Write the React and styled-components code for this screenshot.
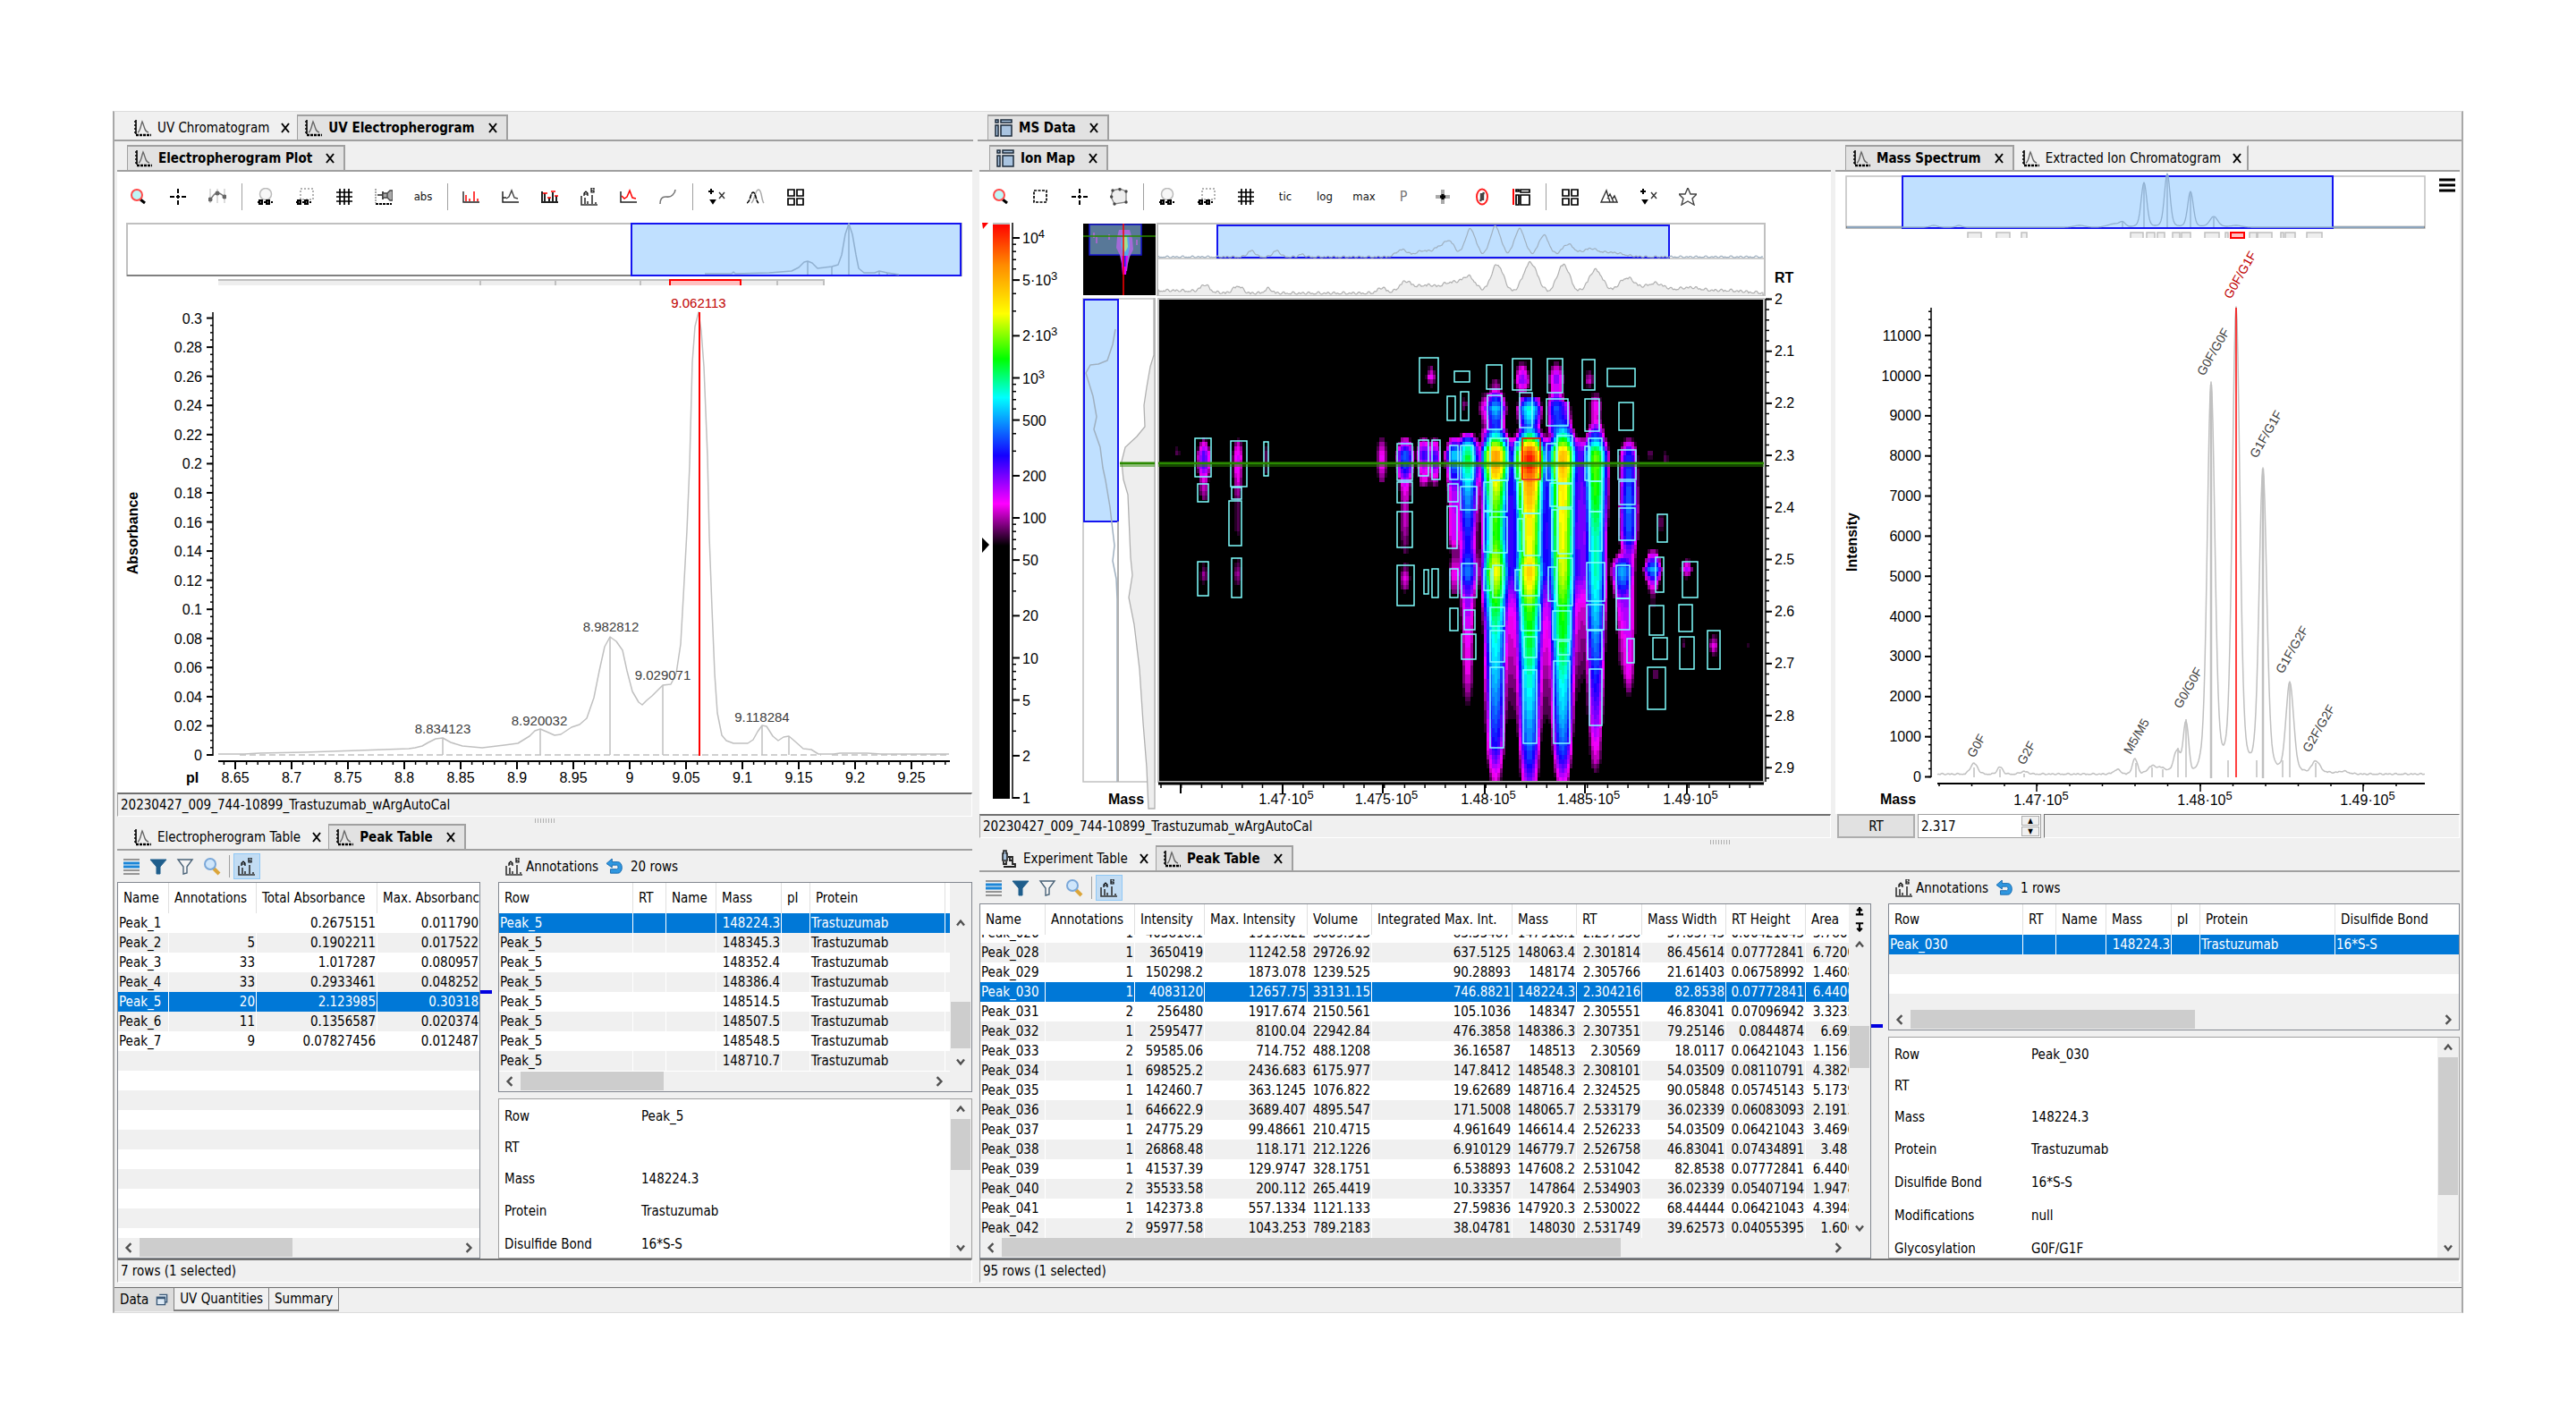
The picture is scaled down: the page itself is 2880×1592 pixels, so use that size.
import { useEffect, useRef } from "react"
import styled, { createGlobalStyle } from "styled-components"

const PLOT_FONT = '"Liberation Sans", Arial, sans-serif'

/* ---------- table data ---------- */

const peakColumns = [
  { label: "Name", width: 57 },
  { label: "Annotations", width: 98, right: true },
  { label: "Total Absorbance", width: 135, right: true },
  { label: "Max. Absorbance", right: true },
]

const peakRows = [
  ["Peak_1", "", "0.2675151", "0.011790"],
  ["Peak_2", "5", "0.1902211", "0.017522"],
  ["Peak_3", "33", "1.017287", "0.080957"],
  ["Peak_4", "33", "0.2933461", "0.048252"],
  ["Peak_5", "20", "2.123985", "0.30318"],
  ["Peak_6", "11", "0.1356587", "0.020374"],
  ["Peak_7", "9", "0.07827456", "0.012487"],
]

const annotationColumns = [
  { label: "Row", width: 150 },
  { label: "RT", width: 37 },
  { label: "Name", width: 56 },
  { label: "Mass", width: 73, right: true },
  { label: "pI", width: 32 },
  { label: "Protein", width: 151 },
]

const annotationRows = [
  "148224.3", "148345.3", "148352.4", "148386.4", "148514.5", "148507.5", "148548.5", "148710.7",
].map((mass) => ["Peak_5", "", "", mass, "", "Trastuzumab", ""])

const ionColumns = [
  { label: "Name", width: 73 },
  { label: "Annotations", width: 100, right: true },
  { label: "Intensity", width: 78, right: true },
  { label: "Max. Intensity", width: 115, right: true },
  { label: "Volume", width: 72, right: true },
  { label: "Integrated Max. Int.", width: 157, right: true },
  { label: "Mass", width: 72, right: true },
  { label: "RT", width: 73, right: true },
  { label: "Mass Width", width: 94, right: true },
  { label: "RT Height", width: 89, right: true },
  { label: "Area", width: 56, right: true },
]

const ionRows = [
  ["Peak_026", "1", "405818.1", "1919.622", "3869.913", "83.55487", "147918.1", "2.297358", "57.63743", "0.06421043", "3.7861"],
  ["Peak_028", "1", "3650419", "11242.58", "29726.92", "637.5125", "148063.4", "2.301814", "86.45614", "0.07772841", "6.7200"],
  ["Peak_029", "1", "150298.2", "1873.078", "1239.525", "90.28893", "148174", "2.305766", "21.61403", "0.06758992", "1.4608"],
  ["Peak_030", "1", "4083120", "12657.75", "33131.15", "746.8821", "148224.3", "2.304216", "82.8538", "0.07772841", "6.4400"],
  ["Peak_031", "2", "256480", "1917.674", "2150.561", "105.1036", "148347", "2.305551", "46.83041", "0.07096942", "3.3235"],
  ["Peak_032", "1", "2595477", "8100.04", "22942.84", "476.3858", "148386.3", "2.307351", "79.25146", "0.0844874", "6.695"],
  ["Peak_033", "2", "59585.06", "714.752", "488.1208", "36.16587", "148513", "2.30569", "18.0117", "0.06421043", "1.1565"],
  ["Peak_034", "1", "698525.2", "2436.683", "6175.977", "147.8412", "148548.3", "2.308101", "54.03509", "0.08110791", "4.3826"],
  ["Peak_035", "1", "142460.7", "363.1245", "1076.822", "19.62689", "148716.4", "2.324525", "90.05848", "0.05745143", "5.1739"],
  ["Peak_036", "1", "646622.9", "3689.407", "4895.547", "171.5008", "148065.7", "2.533179", "36.02339", "0.06083093", "2.1913"],
  ["Peak_037", "1", "24775.29", "99.48661", "210.4715", "4.961649", "146614.4", "2.526233", "54.03509", "0.06421043", "3.4696"],
  ["Peak_038", "1", "26868.48", "118.171", "212.1226", "6.910129", "146779.7", "2.526758", "46.83041", "0.07434891", "3.481"],
  ["Peak_039", "1", "41537.39", "129.9747", "328.1751", "6.538893", "147608.2", "2.531042", "82.8538", "0.07772841", "6.4400"],
  ["Peak_040", "2", "35533.58", "200.112", "265.4419", "10.33357", "147864", "2.534903", "36.02339", "0.05407194", "1.9478"],
  ["Peak_041", "1", "142373.8", "557.1334", "1121.133", "27.59836", "147920.3", "2.530022", "68.44444", "0.06421043", "4.3948"],
  ["Peak_042", "2", "95977.58", "1043.253", "789.2183", "38.04781", "148030", "2.531749", "39.62573", "0.04055395", "1.606"],
]

const ionAnnotationColumns = [...annotationColumns, { label: "Disulfide Bond" }]
const ionAnnotationRows = [["Peak_030", "", "", "148224.3", "", "Trastuzumab", "16*S-S"]]

const peakDetails = [
  ["Row", "Peak_5"], ["RT", ""], ["Mass", "148224.3"], ["Protein", "Trastuzumab"], ["Disulfide Bond", "16*S-S"],
]
const ionDetails = [
  ["Row", "Peak_030"], ["RT", ""], ["Mass", "148224.3"], ["Protein", "Trastuzumab"],
  ["Disulfide Bond", "16*S-S"], ["Modifications", "null"], ["Glycosylation", "G0F/G1F"],
]

/* ---------- icons ---------- */

const Svg = styled.svg`
  display: block;
  flex: none;
  width: ${(p) => p.$size || 20}px;
  height: ${(p) => p.$size || 20}px;
  fill: none;
  stroke: #222;
`

const icons = {
  zoom: <><path d="M12 13l5 4" stroke="#000" strokeWidth="3" /><circle cx="8" cy="8" r="6" fill="#bff6f6" stroke="#ff4b4b" strokeWidth="2" /></>,
  cross: <path d="M1 10h18M10 1v18" stroke="#000" strokeWidth="2" strokeDasharray="5 2 4 2 5" />,
  arc: <><path d="M2 1v16M10 1v16M18 1v16" stroke="#bbb" /><path d="M2 13C5 11 5 6 10 6s5 2 8 4" stroke="#777" strokeWidth="1.5" /><g fill="#666" stroke="none"><circle cx="2" cy="13" r="2.5" /><circle cx="10" cy="6" r="2.5" /><circle cx="18" cy="10" r="2.5" /></g></>,
  lensLink: <><circle cx="10" cy="7" r="6.5" fill="#f7f7f7" stroke="#bbb" strokeWidth="1.5" /><path d="M1 16h2M8 16h3M16 16h2" stroke="#000" strokeWidth="2" /><path d="M3 14h3v4H3zM11 14h3v4h-3z" fill="#777" stroke="#000" strokeWidth="2" /></>,
  boxLink: <><path d="M5 1h14v12H5z" stroke="#999" strokeWidth="1.5" strokeDasharray="2 2" /><path d="M0 16h2M7 16h3M15 16h2" stroke="#000" strokeWidth="2" /><path d="M2 14h3v4H2zM10 14h3v4h-3z" fill="#777" stroke="#000" strokeWidth="2" /></>,
  grid: <path d="M5 1v18M10 1v18M15 1v18M1 5h18M1 10h18M1 15h18" stroke="#000" strokeWidth="1.7" />,
  pin: <><path d="M1 1v16" stroke="#aaa" strokeWidth="2" strokeDasharray="2 1" /><path d="M1 18h18" stroke="#000" strokeWidth="2" strokeDasharray="3 1" /><path d="M3 8h6M9 4v9" stroke="#222" strokeWidth="1.6" /><path d="M9 6h5v5H9zM14 6l3-3h3v11h-3l-3-3z" fill="#aaa" stroke="#444" strokeWidth="1.3" /></>,
  redBars: <><path d="M1 4v12h18" strokeWidth="1.4" /><path d="M4 8v7M8 12v3M13 4v11M17 12v3" stroke="#f00" strokeWidth="1.5" /></>,
  darkPeak: <><path d="M1 4v12h18M1 11h4" strokeWidth="1.5" /><path d="M5 12l3-2 3-7 3 8 4 1" stroke="#444" strokeWidth="1.4" /></>,
  mixBars: <><path d="M1 4v12h18M4 6v9M9 11v4M13 5v10M17 9v6" strokeWidth="2" /><path d="M2 6h5M7 11h4M11 4h5M15 9h4" stroke="#f00" strokeWidth="1.6" /></>,
  abBars: <><path d="M1 9v10h18M5 11v7M8 15v3M13 8v10M17 16v2" stroke="#333" strokeWidth="1.6" /><path d="M4 9V6l2-2 2 2v3M4 7h4M12 0v5h3V3h-3M12 0h3v2" stroke="#000" strokeWidth="1.2" /></>,
  redPeak: <><path d="M1 4v12h18" strokeWidth="1.5" /><path d="M2 9l3 3 3-2 3-7 3 8 4 1" stroke="#f00" strokeWidth="1.5" /></>,
  curve: <path d="M1 18c0-5 2-8 6-8s5 1 8-2c2-2 3-4 3-6" stroke="#777" strokeWidth="1.6" />,
  plusX: <><path d="M4 1v6M1 4h6" stroke="#000" strokeWidth="2" /><path d="M13 5l6 7M19 5l-6 7" stroke="#333" strokeWidth="1.4" /><path d="M4 14h4l-2 3z" fill="#000" stroke="#000" strokeWidth="2" /></>,
  twin: <><path d="M5 17c4-3 4-15 8-15s3 12 6 15" stroke="#aaa" strokeWidth="1.5" /><path d="M0 17c4-1 4-12 7-12s3 10 6 12" stroke="#000" strokeWidth="1.6" strokeDasharray="5 1" /></>,
  tiles: <path d="M2 2h7v7H2zM12 2h7v7h-7zM2 12h7v7H2zM12 12h7v7h-7z" stroke="#000" strokeWidth="1.7" />,
  rect: <path d="M3 3h14v13H3z" stroke="#000" strokeWidth="1.7" strokeDasharray="3 1.5" />,
  lasso: <><path d="M3 3l8-2 7 3v12l-13 2-4-8z" fill="#eee" stroke="#888" strokeWidth="1.3" /><g fill="#444" stroke="none"><circle cx="3" cy="3" r="1.7" /><circle cx="11" cy="1.7" r="1.7" /><circle cx="18" cy="4" r="1.7" /><circle cx="18" cy="16" r="1.7" /><circle cx="5" cy="18" r="1.7" /><circle cx="1.7" cy="10" r="1.7" /></g></>,
  plusBlur: <><path d="M10 2v16M2 10h16" stroke="#aaa" strokeWidth="4" /><path d="M7 10h6M10 7v6" stroke="#000" strokeWidth="3" /></>,
  heat: <><ellipse cx="10" cy="10" rx="6" ry="8.5" fill="#fff" stroke="#f22" strokeWidth="2" /><path d="M12 5L8 15M9 6v8M11 6v8" stroke="#444" strokeWidth="2.4" /></>,
  layout: <><path d="M1 1v18" stroke="#f00" strokeWidth="2" /><path d="M4 2h3v2H4zM9 2h10v3H9zM4 8h3v11H4zM9 8h10v11H9z" stroke="#000" strokeWidth="1.7" /></>,
  peaks: <path d="M1 16L7 3l4 13zM8 12l3-5 4 9M14 12l2-3 3 7H3" stroke="#333" strokeWidth="1.4" />,
  star: <path d="M10 0l3 7h7l-5 5 2 7-7-4-7 4 2-7-5-5h7z" stroke="#444" strokeWidth="1.4" />,
  chart: <><path d="M3 1v16M1 3h2M1 7h2M1 11h2M1 15h2" stroke="#000" strokeWidth="1.6" /><path d="M3 18h17" stroke="#000" strokeWidth="2.4" strokeDasharray="3 1" /><path d="M5 15c3-1 3-7 5-12 3 6 2 11 7 12" stroke="#666" strokeWidth="1.4" /></>,
  panes: <><path d="M1 1h3v3H1zM7 1h12v3H7zM1 7h3v12H1zM7 7h12v12H7z" fill="#a9c4e0" stroke="#1b2a3a" strokeWidth="1.5" /></>,
  scope: <><path d="M5 4V1h3v3h1v8H4V4z" fill="#a9c4e0" stroke="#222" strokeWidth="1.6" /><path d="M5 13v3h3v-3M10 8h5v8h3v3H5M12 8v4h3" fill="none" stroke="#222" strokeWidth="1.8" /></>,
  rows: <><path d="M1 2h18M1 18h18M1 14h18" stroke="#777" strokeWidth="1.6" /><path d="M1 6h18M1 10h18" stroke="#1b86d8" strokeWidth="3" /></>,
  filter: <path d="M1 2h18l-7 8v8H8v-8z" fill="#1f5e8c" stroke="#1f5e8c" />,
  filterOff: <path d="M2 2h16l-6 8v7l-4 1v-8z" fill="#f4f4f4" stroke="#4a6378" strokeWidth="1.4" />,
  find: <><path d="M12 12l6 6" stroke="#dba53a" strokeWidth="4" /><circle cx="8" cy="7" r="6" fill="#cfe6fb" stroke="#7aa7d8" strokeWidth="2" /></>,
  undo: <path d="M7 0L0 6l7 5V8h6c2 0 2 5 0 5H5v5h9c7 0 7-14 0-14H7z" fill="#2f97e0" stroke="#1467ab" strokeWidth="1" />,
  windows: <path d="M6 2h12v12h-3M2 6h13v12H2zM2 8h13" fill="#dce9f5" stroke="#3b5978" strokeWidth="2" />,
  sort: <path d="M10 0v6M8 3l2-2 2 2M7 6h6M10 13v6M8 17l2 2 2-2M7 13h6" stroke="#000" strokeWidth="1.5" />,
  menu: <path d="M1 4h18M1 10h18M1 16h18" stroke="#000" strokeWidth="3" />,
  up: <path d="M5 13l5-6 5 6" stroke="#505050" strokeWidth="3" />,
  down: <path d="M5 7l5 6 5-6" stroke="#505050" strokeWidth="3" />,
  left: <path d="M13 4l-6 6 6 6" stroke="#505050" strokeWidth="3" />,
  right: <path d="M7 4l6 6-6 6" stroke="#505050" strokeWidth="3" />,
}

const Icon = ({ name, size }) => (
  <Svg viewBox="0 0 20 20" $size={size} aria-hidden="true">{icons[name]}</Svg>
)

/* ---------- shared pieces ---------- */

const TabStrip = ({ tabs, inset, height = 33 }) => (
  <TabBar $inset={inset} $height={height}>
    {tabs.map((tab) => (
      <Tab key={tab.label} $active={tab.active} $divided={tab.divided}>
        <TabLabel type="button" $active={tab.active}>
          <Icon name={tab.icon || "chart"} />
          {tab.label}
        </TabLabel>
        <CloseButton type="button" aria-label={`Close ${tab.label}`}>
          <svg viewBox="0 0 12 12" width="12" height="12"><path d="M2 1l8 10M10 1L2 11" stroke="#000" strokeWidth="2" /></svg>
        </CloseButton>
      </Tab>
    ))}
  </TabBar>
)

const PlotToolbar = ({ items, label }) => (
  <Tools role="toolbar" aria-label={label}>
    {items.map((item, i) => {
      if (item === "|") return <ToolDivider key={i} />
      if (item.startsWith("#")) return <ToolButton key={i} type="button" $muted={item === "#P"}>{item.slice(1)}</ToolButton>
      return <ToolButton key={i} type="button" aria-label={item}><Icon name={item} /></ToolButton>
    })}
  </Tools>
)

const TableToolbar = () => (
  <SmallTools role="toolbar" aria-label="Table tools">
    {["rows", "filter", "filterOff", "find"].map((name) => (
      <SmallButton key={name} type="button" aria-label={name}><Icon name={name} /></SmallButton>
    ))}
    <SmallDivider />
    <SmallButton type="button" aria-label="Show annotations" $pressed><Icon name="abBars" /></SmallButton>
  </SmallTools>
)

const HorizontalScroll = ({ size, corner }) => (
  <HTrack $corner={corner}>
    <ArrowButton type="button" aria-label="Scroll left"><Icon name="left" size={16} /></ArrowButton>
    <ThumbLane><HThumb $size={size} /></ThumbLane>
    <ArrowButton type="button" aria-label="Scroll right"><Icon name="right" size={16} /></ArrowButton>
  </HTrack>
)

const VerticalScroll = ({ start, size, head }) => (
  <VTrack>
    {head && <VHead>{head}</VHead>}
    <ArrowButton type="button" aria-label="Scroll up"><Icon name="up" size={16} /></ArrowButton>
    <VLane $start={start} $size={size}><VThumb /></VLane>
    <ArrowButton type="button" aria-label="Scroll down"><Icon name="down" size={16} /></ArrowButton>
  </VTrack>
)

const DataTable = ({ label, columns, rows, selected, height, scrollEnd, vertical, horizontal }) => {
  const view = useRef(null)
  useEffect(() => {
    if (scrollEnd) view.current.scrollTop = view.current.scrollHeight
  }, [scrollEnd])

  return (
    <TableBox $height={height}>
      <TableMain>
        <Viewport ref={view}>
          <Table aria-label={label}>
            <colgroup>
              {columns.map((c) => <Col key={c.label} $width={c.width} />)}
              {rows[0].length > columns.length && <col />}
            </colgroup>
            <thead>
              <tr>
                {columns.map((c) => <Th key={c.label} scope="col">{c.label}</Th>)}
                {rows[0].length > columns.length && <Th as="td" />}
              </tr>
            </thead>
            <tbody>
              {rows.map((row, r) => (
                <Tr key={r} $selected={r === selected}>
                  {row.map((cell, c) => <Td key={c} $right={columns[c]?.right}>{cell}</Td>)}
                </Tr>
              ))}
            </tbody>
          </Table>
        </Viewport>
        {vertical}
      </TableMain>
      {horizontal}
    </TableBox>
  )
}

const AnnotationHeader = ({ count }) => (
  <AnnotationBar>
    <Icon name="abBars" />
    <span>Annotations</span>
    <SmallButton type="button" aria-label="Reset"><Icon name="undo" size={18} /></SmallButton>
    <span>{count} rows</span>
  </AnnotationBar>
)

const Details = ({ rows, height, start, size }) => (
  <DetailBox $height={height}>
    <DetailList>
      {rows.map(([term, value], i) => (
        <DetailRow key={term} $compact={i < 3}>
          <dt>{term}</dt>
          <dd>{value}</dd>
        </DetailRow>
      ))}
    </DetailList>
    <VerticalScroll start={start} size={size} />
  </DetailBox>
)

/* ---------- plots ---------- */

const range = (from, to, step) => {
  const out = []
  for (let v = from; v <= to + step / 1000; v += step) out.push(v)
  return out
}

// bell shaped peaks [centre, height, width] drawn above a baseline
const bells = (x0, x1, base, peaks, jitter = 0) =>
  range(x0, x1, 1)
    .map((x) => {
      const h = peaks.reduce((sum, [c, height, w]) => sum + height * Math.exp(-((x - c) ** 2) / (2 * w * w)), 0)
      const noise = jitter * Math.abs(Math.sin(x * 12.9) * Math.cos(x * 3.7))
      return `${x},${(base - h - noise).toFixed(1)}`
    })
    .join(" ")

const Trace = ({ points, color = "#c0c0c0", fill = "none", width = 1.5 }) => (
  <polyline points={points} fill={fill} stroke={color} strokeWidth={width} strokeLinejoin="round" />
)

const uvTrace =
  "244,843 273,843 290,842 340,841 400,839 457,837 464,836 472,834 479,830 487,826 495,825 504,830 517,834 539,836 564,833 579,831 592,823 598,817 604,815 611,818 620,822 627,821 639,813 648,810 656,803 664,780 670,750 676,723 682,712 689,717 696,727 701,750 707,773 714,785 718,788 723,783 729,778 736,771 741,766 750,765 756,753 761,720 764,667 768,593 771,520 774,405 777,365 781,349 784,370 787,410 791,510 793,600 796,680 799,753 802,797 807,822 812,828 820,831 836,831 842,827 847,818 852,811 857,812 864,823 870,828 876,824 882,823 889,829 898,837 907,838 915,843 932,843 939,842 970,842 985,843 1061,843"

const uvLabels = [
  ["8.834123", 495, 820], ["8.920032", 603, 811], ["8.982812", 683, 706], ["9.029071", 741, 760], ["9.118284", 852, 807],
]

const ElectropherogramPlot = () => (
  <Plot viewBox="131 248 956 638" role="img" aria-label="Electropherogram plot">
    <rect x="142" y="250" width="933" height="58" fill="#fff" stroke="#c0c0c0" strokeWidth="2" />
    <path d="M142 308h564" stroke="#808080" strokeWidth="2" />
    <rect x="706" y="250" width="368" height="58" fill="#c0e0ff" stroke="#1414f0" strokeWidth="2" />
    <Trace
      color="#90b0d0"
      points="788,306 818,306 820,304 822,306 860,305 885,303 893,299 899,293 903,292 908,294 914,300 922,299 930,298 937,296 941,285 945,262 949,250 953,262 957,285 960,300 966,305 978,305 983,303 992,305 1005,307"
    />
    <path d="M903 292v15M930 298v9M949 250v57M983 303v4M992 305v2" stroke="#90b0d0" strokeWidth="1.5" />
    <rect x="244" y="312" width="677" height="7" fill="#eee" />
    <path d="M244 313h677M537 312v7M621 312v7M716 312v7M869 312v7M921 312v7" stroke="#c0c0c0" strokeWidth="2" />
    <path d="M749 319v-6h79v6" fill="#ffc0c0" stroke="#f00" strokeWidth="2" />

    <path d="M238 349v496" stroke="#000" strokeWidth="1.5" />
    {range(0, 0.3, 0.02).map((v) => (
      <g key={v}>
        <path d={`M231 ${844 - v * 1628}h7`} stroke="#000" strokeWidth="2" />
        <text x="226" y={850 - v * 1628} textAnchor="end">{Number(v.toFixed(2))}</text>
      </g>
    ))}
    {range(0, 0.295, 0.005).map((v) => <path key={v} d={`M235 ${844 - v * 1628}h3`} stroke="#000" strokeWidth="1.5" />)}
    <path d="M244 851h818" stroke="#000" strokeWidth="2" />
    {range(8.64, 9.28, 0.01).map((v) => <path key={v} d={`M${263 + (v - 8.65) * 1260} 851v4`} stroke="#000" strokeWidth="1.5" />)}
    {range(8.65, 9.26, 0.05).map((v) => (
      <g key={v}>
        <path d={`M${263 + (v - 8.65) * 1260} 851v9`} stroke="#000" strokeWidth="2" />
        <text x={263 + (v - 8.65) * 1260} y="875" textAnchor="middle">{Number(v.toFixed(2))}</text>
      </g>
    ))}
    <text x="208" y="875" fontWeight="bold">pI</text>
    <text transform="translate(154 596) rotate(-90)" textAnchor="middle" fontWeight="bold">Absorbance</text>

    <path d="M268 844h650M930 844h130" stroke="#c0c0c0" strokeWidth="1.5" strokeDasharray="7 4" />
    <Trace points={uvTrace} />
    <path d="M495 825v19M604 815v29M682 712v132M741 766v78M852 811v33M882 823v21" stroke="#c0c0c0" strokeWidth="1.5" />
    <path d="M782 349v496" stroke="#f00" strokeWidth="2" />
    {uvLabels.map(([text, x, y]) => (
      <PeakText key={text} x={x} y={y} textAnchor="middle">{text}</PeakText>
    ))}
    <PeakText x="781" y="344" textAnchor="middle" $hot>9.062113</PeakText>
  </Plot>
)

// colour scale, from the threshold (0) to the strongest signal (1)
const scale = [
  [0, [0, 0, 0]], [0.13, [255, 0, 255]], [0.28, [20, 0, 255]], [0.46, [0, 255, 255]],
  [0.58, [0, 255, 0]], [0.72, [255, 255, 0]], [0.87, [255, 140, 0]], [1, [255, 0, 0]],
]

const heatColor = (t) => {
  const v = Math.min(1, t)
  const i = Math.max(1, scale.findIndex(([stop]) => stop >= v))
  const [t0, a] = scale[i - 1]
  const [t1, b] = scale[i]
  const f = (v - t0) / (t1 - t0)
  return `rgb(${a.map((c, k) => Math.round(c + (b[k] - c) * f)).join(",")})`
}

// mass columns: centre, sharpness, [y, level] profile
const ridges = [
  [1710, 0.0021, [[440, -0.1], [445, 0.3], [457, 0.5], [478, 0.36], [488, 0.55], [500, 0.86], [508, 0.97], [520, 1], [540, 0.85], [580, 0.75], [620, 0.72], [640, 0.79], [665, 0.68], [690, 0.6], [720, 0.56], [750, 0.5], [790, 0.44], [830, 0.37], [860, 0.27], [874, 0.22]]],
  [1702, 0.0026, [[400, -0.05], [410, 0.1], [425, 0.22], [436, 0.12], [446, -0.1]]],
  [1672, 0.0023, [[418, -0.05], [425, 0.05], [435, 0.1], [445, 0.3], [457, 0.43], [475, 0.3], [488, 0.5], [505, 0.84], [520, 0.85], [540, 0.72], [570, 0.62], [600, 0.6], [640, 0.73], [670, 0.6], [700, 0.5], [735, 0.45], [770, 0.4], [810, 0.33], [840, 0.27], [860, 0.17], [874, 0.1]]],
  [1747, 0.0023, [[450, 0.2], [470, 0.28], [485, 0.48], [505, 0.8], [520, 0.82], [540, 0.75], [590, 0.72], [640, 0.7], [680, 0.6], [720, 0.57], [760, 0.48], [800, 0.42], [840, 0.33], [874, 0.15]]],
  [1740, 0.0026, [[400, -0.05], [412, 0.12], [424, 0.22], [434, 0.15], [442, 0.2], [455, 0.34], [470, 0.3], [485, 0.3]]],
  [1784, 0.0026, [[432, -0.05], [450, 0.14], [470, 0.12], [485, 0.3], [508, 0.64], [530, 0.62], [560, 0.58], [600, 0.5], [640, 0.5], [690, 0.42], [730, 0.35], [770, 0.28], [810, 0.2], [850, 0.1], [872, -0.02]]],
  [1821, 0.0026, [[486, -0.05], [495, 0.14], [508, 0.3], [530, 0.32], [570, 0.36], [600, 0.33], [620, 0.2], [640, 0.15], [690, 0.17], [720, 0.15], [750, 0.14], [775, 0.05], [790, -0.1]]],
  [1814, 0.0022, [[615, 0], [628, 0.3], [638, 0.42], [652, 0.34], [670, 0.2], [700, 0.12], [740, 0.05], [760, -0.1]]],
  [1641, 0.0026, [[480, -0.05], [490, 0.3], [500, 0.5], [512, 0.56], [530, 0.5], [545, 0.42], [570, 0.36], [610, 0.27], [640, 0.38], [665, 0.22], [690, 0.17], [720, 0.14], [760, 0.11], [785, 0.04], [795, -0.1]]],
  [1626, 0.003, [[488, 0.1], [508, 0.45], [530, 0.3], [550, 0.18], [600, 0.17], [620, 0.05], [640, 0.14], [660, 0.08], [675, -0.1]]],
  [1604, 0.004, [[484, -0.05], [495, 0.12], [510, 0.27], [525, 0.2], [540, 0.08], [550, -0.05]]],
  [1592, 0.003, [[484, -0.05], [495, 0.14], [508, 0.28], [525, 0.16], [540, 0.12], [548, -0.05]]],
  [1571, 0.003, [[484, -0.05], [492, 0.12], [508, 0.36], [525, 0.3], [540, 0.16], [560, 0.1], [590, 0.09], [615, 0.04], [625, -0.01], [645, 0.12], [658, 0.08], [668, -0.1]]],
  [1545, 0.0035, [[484, -0.05], [495, 0.09], [510, 0.14], [525, 0.12], [537, 0.06], [545, -0.1]]],
  [1346, 0.0037, [[484, -0.05], [495, 0.1], [508, 0.25], [522, 0.24], [535, 0.13], [555, 0.07], [566, -0.05], [620, -0.05], [643, 0.08], [665, -0.05]]],
  [1384, 0.0038, [[486, -0.05], [497, 0.1], [512, 0.16], [530, 0.13], [545, 0.09], [565, 0.04], [590, 0.04], [612, -0.03], [643, 0.08], [668, -0.05]]],
  [1416, 0.004, [[488, -0.02], [505, 0.05], [530, 0.03], [540, -0.05]]],
  [1316, 0.004, [[494, -0.02], [505, 0.05], [515, -0.02]]],
  [1600, 0.004, [[403, -0.02], [422, 0.14], [434, -0.02]]],
  [1777, 0.004, [[408, -0.02], [425, 0.11], [438, -0.02]]],
  [1637, 0.004, [[438, -0.02], [452, 0.06], [466, -0.02]]],
  [1659, 0.004, [[435, -0.02], [455, 0.14], [475, 0.05], [490, 0.1]]],
  [1848, 0.003, [[608, -0.05], [620, 0.15], [637, 0.42], [650, 0.2], [665, 0.05], [690, -0.02]]],
  [1886, 0.0035, [[620, -0.05], [636, 0.18], [652, -0.05]]],
  [1916, 0.004, [[704, -0.02], [722, 0.13], [740, -0.02]]],
  [1883, 0.004, [[708, -0.02], [720, 0.04], [732, -0.02]]],
  [1954, 0.004, [[712, -0.02], [722, 0.03], [730, -0.02]]],
  [1851, 0.004, [[738, -0.02], [754, 0.05], [770, -0.02]]],
  [1857, 0.004, [[566, -0.02], [582, 0.06], [608, -0.02]]],
  [1845, 0.004, [[494, -0.02], [508, 0.05], [520, -0.02]]],
  [1862, 0.004, [[500, -0.02], [514, 0.05], [526, -0.02]]],
  [1691, 0.0006, [[484, -0.1], [505, 0.24], [560, 0.24], [640, 0.24], [680, 0.12], [740, 0.08], [800, 0.02], [830, -0.1]]],
  [1729, 0.0006, [[484, -0.1], [505, 0.24], [560, 0.24], [640, 0.24], [680, 0.13], [740, 0.08], [800, 0.03], [840, -0.1]]],
  [1765, 0.0008, [[484, -0.1], [505, 0.22], [560, 0.2], [640, 0.22], [680, 0.1], [740, 0.05], [800, -0.02], [820, -0.1]]],
  [1722, 0.00004, [[482, -0.1], [495, 0.22], [520, 0.25], [560, 0.22], [600, 0.17], [640, 0.22], [665, 0.12], [690, 0.05], [720, 0], [760, -0.1]]],
]

const levelAt = (profile, y) => {
  const i = profile.findIndex(([py]) => py >= y)
  if (i < 0) return profile[profile.length - 1][0] >= 872 ? profile[profile.length - 1][1] : -1
  if (i === 0) return -1
  const [y0, a] = profile[i - 1]
  const [y1, b] = profile[i]
  return a + ((b - a) * (y - y0)) / (y1 - y0)
}

const CELL_W = 3
const CELL_H = 5

// neighbouring cells of one colour are merged into a single run
const buildHeatMap = () => {
  const runs = []
  for (let y = 399; y < 874; y += CELL_H) {
    const live = ridges
      .map(([cx, k, profile]) => [cx, k, levelAt(profile, y + CELL_H / 2)])
      .filter(([, , level]) => level > -1)
    let run = null
    for (let x = 1296; x < 1971; x += CELL_W) {
      const sum = live.reduce((s, [cx, k, level]) => s + Math.exp(14 * (level - k * (x + 1.5 - cx) ** 2)), 0)
      const t = sum > 0 ? Math.log(sum) / 14 : 0
      const step = Math.max(0, Math.round(t * 50))
      if (run && run.step === step) run.w += CELL_W
      else {
        run = { x, y, w: CELL_W, step }
        if (step > 0) runs.push(run)
      }
    }
  }
  return runs
}

const heatRuns = buildHeatMap()

// detected peaks on the map: x, y, width, height
const peakBoxes = [
  [1587, 400, 21, 39], [1626, 415, 17, 12], [1662, 408, 17, 27], [1691, 401, 21, 35], [1730, 401, 17, 38],
  [1769, 402, 14, 34], [1797, 412, 31, 20], [1618, 443, 9, 27], [1633, 438, 9, 32], [1663, 442, 16, 38],
  [1699, 439, 14, 39], [1729, 446, 24, 30], [1772, 446, 16, 36], [1810, 450, 16, 31], [1336, 490, 18, 43],
  [1376, 493, 18, 51], [1413, 494, 5, 38], [1562, 496, 17, 41], [1586, 492, 11, 40], [1601, 492, 9, 44],
  [1621, 498, 9, 38], [1633, 498, 14, 38], [1666, 490, 20, 47], [1694, 494, 5, 41], [1729, 496, 11, 41],
  [1741, 487, 17, 53], [1772, 499, 5, 38], [1776, 490, 15, 48], [1809, 503, 20, 33], [1339, 541, 12, 20],
  [1377, 545, 11, 13], [1374, 560, 14, 50], [1562, 539, 17, 23], [1562, 572, 17, 40], [1619, 541, 11, 20],
  [1633, 544, 18, 26], [1659, 539, 9, 32], [1666, 537, 19, 35], [1697, 539, 5, 30], [1702, 536, 20, 38],
  [1733, 540, 8, 26], [1741, 541, 17, 26], [1777, 538, 14, 34], [1810, 538, 18, 26], [1810, 568, 18, 36],
  [1618, 566, 11, 47], [1659, 572, 9, 45], [1666, 578, 19, 40], [1697, 580, 6, 36], [1704, 574, 18, 47],
  [1735, 570, 6, 46], [1742, 569, 16, 50], [1777, 572, 14, 44], [1853, 575, 11, 31], [1851, 623, 9, 39],
  [1881, 628, 17, 40], [1339, 628, 12, 38], [1377, 624, 11, 44], [1562, 632, 19, 45], [1592, 637, 5, 27],
  [1601, 636, 7, 32], [1621, 636, 9, 32], [1634, 630, 17, 38], [1659, 636, 8, 24], [1669, 632, 11, 36],
  [1694, 637, 6, 23], [1701, 632, 20, 34], [1731, 634, 9, 38], [1741, 624, 17, 53], [1774, 629, 20, 43],
  [1807, 632, 15, 37], [1807, 669, 15, 35], [1621, 680, 9, 25], [1637, 682, 12, 22], [1666, 679, 16, 21],
  [1666, 705, 16, 35], [1701, 676, 21, 29], [1704, 712, 14, 23], [1736, 683, 20, 32], [1742, 717, 13, 15],
  [1774, 676, 19, 28], [1775, 705, 16, 32], [1634, 709, 16, 28], [1819, 714, 8, 27], [1844, 677, 16, 33],
  [1848, 713, 16, 24], [1877, 676, 15, 30], [1878, 712, 16, 36], [1909, 705, 14, 43], [1842, 746, 20, 47],
  [1666, 746, 15, 90], [1703, 749, 15, 82], [1737, 739, 18, 92], [1777, 748, 14, 63],
]

const massOverview = bells(1295, 1971, 288, [
  [1399, 7, 4], [1427, 7, 4], [1455, 3, 3], [1567, 8, 6], [1592, 7, 9], [1608, 8, 5], [1620, 18, 6], [1644, 31, 6],
  [1672, 34, 6], [1699, 31, 6], [1726, 24, 6], [1753, 14, 7], [1777, 8, 8], [1800, 5, 14],
], 2)
const massProfile = bells(1295, 1971, 329, [
  [1310, 3, 30], [1347, 8, 5], [1384, 8, 5], [1418, 5, 4], [1545, 6, 5], [1571, 12, 7], [1595, 9, 12], [1622, 11, 9],
  [1642, 18, 8], [1674, 32, 7], [1711, 34, 8], [1748, 32, 7], [1784, 26, 8], [1819, 17, 9], [1850, 11, 11], [1888, 6, 14], [1930, 3, 20],
], 3)

const logTicks = [
  [4, "10", "4"], [3.699, "5·10", "3"], [3.301, "2·10", "3"], [3, "10", "3"], [2.699, "500"], [2.301, "200"],
  [2, "100"], [1.699, "50"], [1.301, "20"], [1, "10"], [0.699, "5"], [0.301, "2"], [0, "1"],
]
const minorLog = [0, 1, 2, 3].flatMap((d) => [3, 4, 6, 7, 8, 9].map((m) => d + Math.log10(m)))
const massTicks = [["1.47", 1434], ["1.475", 1546], ["1.48", 1660], ["1.485", 1772], ["1.49", 1886]]

const IonMapPlot = () => (
  <Plot viewBox="1095 248 952 662" role="img" aria-label="Ion map">
    <defs>
      <linearGradient id="intensity" x1="0" y1="0" x2="0" y2="1">
        {[...scale].reverse().map(([t, rgb]) => (
          <stop key={t} offset={(1 - t) * 0.56} stopColor={`rgb(${rgb.join(",")})`} />
        ))}
      </linearGradient>
    </defs>
    <rect x="1110" y="250" width="19" height="643" fill="url(#intensity)" />
    <path d="M1110 250h19" stroke="#c0c0c0" strokeWidth="2" />
    <path d="M1098 249h7l-6 7z" fill="#f00" />
    <path d="M1098 601l8 8-8 9z" fill="#000" />
    <path d="M1132 249v644" stroke="#000" strokeWidth="1.5" />
    {minorLog.map((v) => <path key={v} d={`M1132 ${892 - v * 156.5}h4`} stroke="#000" strokeWidth="1.5" />)}
    {logTicks.map(([v, text, power]) => (
      <g key={v}>
        <path d={`M1132 ${892 - v * 156.5}h8`} stroke="#000" strokeWidth="2" />
        <text x="1143" y={898 - v * 156.5}>{text}{power && <tspan dy="-6" fontSize="13">{power}</tspan>}</text>
      </g>
    ))}

    <rect x="1211" y="250" width="81" height="80" fill="#000" />
    <rect x="1218" y="251" width="58" height="34" fill="#587898" stroke="#1414d0" strokeWidth="1.5" />
    <path d="M1251 257h12l3 10 1 12-4 8-2 8-1 8h-4l-2-8-2-10-4-8 1-12z" fill="#a46ad8" />
    <path d="M1254 262h8l1 14-2 10-3 4-3-6-2-10z" fill="#58a8e8" />
    <path d="M1255 264h5l1 12-3 6-3-6z" fill="#a0e090" />
    <path d="M1254 286h7l-1 9-1 12h-4l-1-10z" fill="#e000ff" />
    <path d="M1257 286v12" stroke="#2020ff" strokeWidth="3" />
    <path d="M1223 260v6M1226 265v7M1240 262v6M1271 268v6" stroke="#a068c8" strokeWidth="2" />
    <path d="M1211 264h81" stroke="#2a8a00" strokeWidth="1.5" />
    <path d="M1256 250v80" stroke="#f00" strokeWidth="1.5" />

    <rect x="1294" y="250" width="679" height="80" fill="#fff" stroke="#c0c0c0" strokeWidth="2" />
    <path d="M1294 289h679" stroke="#c0c0c0" strokeWidth="1.5" />
    <rect x="1361" y="252" width="505" height="36" fill="#c0e0ff" stroke="#1414f0" strokeWidth="2" />
    <Trace points={massOverview} color="#9fb0c0" width={1.2} />
    <Trace points={`1295,330 ${massProfile} 1971,330`} fill="#eee" color="#b0b0b0" width={1.2} />

    <rect x="1211" y="334" width="80" height="540" fill="#fff" stroke="#c0c0c0" strokeWidth="1.5" />
    <rect x="1212" y="335" width="38" height="248" fill="#c0e0ff" stroke="#1414f0" strokeWidth="2" />
    <Trace color="#9fb0c0" points="1247,368 1244,385 1240,397 1238,403 1228,407 1219,408 1214,417 1218,430 1222,443 1226,466 1223,480 1230,500 1233,523 1236,537 1241,567 1244,593 1246,610 1244,627 1248,647 1249,670 1249,874" />
    <path d="M1250 583v291" stroke="#b0b0b0" strokeWidth="2" />
    <path d="M1290 334v63l-4 13-4 23-3 20 1 24-9 11-13 12-4 16 2 20 5 17 3 70 2 20-4 25 6 30 6 50 4 60 4 50 2 46h7V334z" fill="#eee" stroke="#b0b0b0" strokeWidth="1.3" />

    <rect x="1295" y="334" width="677" height="540" fill="#000" stroke="#c0c0c0" strokeWidth="2" />
    <g shapeRendering="crispEdges">
      {heatRuns.map((r) => (
        <rect key={`${r.x}-${r.y}`} x={r.x} y={r.y} width={Math.min(r.w, 1971 - r.x)} height={Math.min(CELL_H, 873 - r.y)} fill={heatColor(r.step / 50)} />
      ))}
    </g>
    <g fill="none" stroke="#80ffff" strokeWidth="1.5">
      {peakBoxes.map(([x, y, w, h]) => <rect key={`${x}-${y}`} x={x} y={y} width={w} height={h} />)}
    </g>
    <rect x="1702" y="490" width="20" height="46" fill="none" stroke="#f00" strokeWidth="1.5" />
    <path d="M1295 518h677M1252 518h39" stroke="#2a8a00" strokeWidth="3" />
    <path d="M1295 521h677M1252 521h39" stroke="#2a8a00" strokeWidth="1" />

    <path d="M1974 334v540" stroke="#000" strokeWidth="1.5" />
    {range(0, 46, 1).map((i) => <path key={i} d={`M1974 ${334.5 + i * 11.64}h4`} stroke="#000" strokeWidth="1.5" />)}
    {range(0, 9, 1).map((i) => (
      <g key={i}>
        <path d={`M1974 ${334.5 + i * 58.2}h7`} stroke="#000" strokeWidth="2" />
        <text x="1984" y={340 + i * 58.2}>{Number((2 + i / 10).toFixed(1))}</text>
      </g>
    ))}
    <text x="1984" y="316" fontWeight="bold">RT</text>

    <path d="M1295 876h677" stroke="#000" strokeWidth="3" />
    {range(0, 29, 1).map((i) => <path key={i} d={`M${1298 + i * 22.7} 876v5`} stroke="#000" strokeWidth="1.5" />)}
    <path d="M1320 876v11" stroke="#000" strokeWidth="2" />
    {massTicks.map(([text, x]) => (
      <g key={text}>
        <path d={`M${x} 876v11`} stroke="#000" strokeWidth="2" />
        <text x={x + 4} y="899" textAnchor="middle">{text}·10<tspan dy="-6" fontSize="13">5</tspan></text>
      </g>
    ))}
    <text x="1239" y="899" fontWeight="bold">Mass</text>
  </Plot>
)

const spectrum = bells(2166, 2711, 866, [
  [2207, 12, 4], [2236, 8, 3], [2263, 3, 4], [2367, 5, 4], [2387, 17, 3], [2406, 9, 5], [2418, 7, 5], [2434, 27, 4],
  [2444, 58, 3], [2472, 390, 4], [2472, 48, 9], [2500, 466, 4], [2500, 56, 9], [2530, 304, 4], [2530, 38, 9],
  [2560, 88, 4], [2560, 15, 8], [2589, 11, 4], [2590, 4, 12], [2620, 3, 6],
], 1.5)
const spectrumOverview = bells(2065, 2710, 314, [
  [2162, 2, 4], [2190, 2, 3], [2325, 2, 6], [2365, 4, 8], [2373, 4, 3], [2397, 45, 3], [2397, 5, 7], [2423, 54, 3],
  [2423, 6, 7], [2449, 36, 3], [2449, 4, 7], [2475, 9, 4], [2475, 3, 8], [2500, 2, 6],
])
const glycans = [
  ["G0F", 2207, 848], ["G2F", 2263, 856], ["M5/M5", 2382, 844], ["G0/G0F", 2438, 793], ["G0F/G0F", 2464, 421],
  ["G1F/G1F", 2523, 513], ["G1F/G2F", 2552, 754], ["G2F/G2F", 2582, 842],
]
const massWindows = [
  [2200, 15], [2232, 15], [2260, 6], [2382, 14], [2400, 9], [2412, 8], [2429, 8], [2439, 10], [2465, 16],
  [2488, 3], [2515, 8], [2524, 16], [2550, 3], [2555, 11], [2579, 17],
]

const MassSpectrumPlot = () => (
  <Plot viewBox="2052 192 663 718" role="img" aria-label="Mass spectrum">
    <rect x="2064" y="197" width="647" height="58" fill="#fff" stroke="#c0c0c0" strokeWidth="1.5" />
    <path d="M2064 254h647" stroke="#808080" strokeWidth="2.5" />
    <rect x="2127" y="197" width="481" height="58" fill="#c0e0ff" stroke="#1414f0" strokeWidth="2" />
    <g transform="translate(0 -60)">
      <Trace points={spectrumOverview} color="#90b0d0" width={1.3} />
      <path d="M2397 264v50M2423 257v57M2449 274v40M2373 308v6M2475 303v11" stroke="#90b0d0" strokeWidth="1.3" />
    </g>
    {massWindows.map(([x, w]) => (
      <path key={x} d={`M${x} 266v-6h${w}v6`} fill="#eee" stroke="#c0c0c0" strokeWidth="1.5" />
    ))}
    <path d="M2494 266v-6h15v6z" fill="#ffc0c0" stroke="#f00" strokeWidth="2" />

    <path d="M2159 344v525" stroke="#000" strokeWidth="1.5" />
    {range(0, 58, 1).map((i) => <path key={i} d={`M2156 ${868.5 - i * 8.97}h3`} stroke="#000" strokeWidth="1.5" />)}
    {range(0, 11, 1).map((i) => (
      <g key={i}>
        <path d={`M2152 ${868.5 - i * 44.85}h7`} stroke="#000" strokeWidth="2" />
        <text x="2148" y={874 - i * 44.85} textAnchor="end">{i * 1000}</text>
      </g>
    ))}
    <path d="M2166 876h545" stroke="#000" strokeWidth="2" />
    {range(0, 14, 1).map((i) => <path key={i} d={`M${2168 + i * 36.5} 876v3`} stroke="#000" strokeWidth="1.5" />)}
    {[["1.47", 2277], ["1.48", 2460], ["1.49", 2642]].map(([text, x]) => (
      <g key={text}>
        <path d={`M${x} 876v9`} stroke="#000" strokeWidth="1.5" />
        <text x={x + 5} y="900" textAnchor="middle">{text}·10<tspan dy="-6" fontSize="13">5</tspan></text>
      </g>
    ))}
    <text x="2102" y="899" fontWeight="bold">Mass</text>
    <text transform="translate(2076 606) rotate(-90)" textAnchor="middle" fontWeight="bold">Intensity</text>

    <Trace points={spectrum} />
    <path d="M2207 858v11M2236 860v9M2263 865v4M2388 853v16M2406 858v11M2418 860v9M2435 836v33M2444 804v65M2472 430v439M2491 850v19M2523 850v19M2530 524v345M2552 850v19M2560 764v105M2589 853v16" stroke="#c0c0c0" strokeWidth="1.5" />
    <path d="M2472 430v440M2530 524v346" stroke="#c0c0c0" strokeWidth="2.5" />
    <path d="M2500 344v525" stroke="#f00" strokeWidth="1.5" />
    {glycans.map(([text, x, y]) => (
      <GlycanText key={text} transform={`translate(${x} ${y}) rotate(-60)`}>{text}</GlycanText>
    ))}
    <GlycanText transform="translate(2494 335) rotate(-60)" $hot>G0F/G1F</GlycanText>
  </Plot>
)

/* ---------- page ---------- */

const SORTER = <Icon name="sort" size={28} />
const BLANK = <span />

const App = () => (
  <Page>
    <GlobalStyle />
    <Window>
      <Workspace>
        <Pane>
          <TabStrip tabs={[{ label: "UV Chromatogram" }, { label: "UV Electropherogram", active: true }]} inset={13} />
          <PaneBody>
            <TabStrip tabs={[{ label: "Electropherogram Plot", active: true }]} inset={11} height={34} />
            <PlotPanel>
              <PlotToolbar
                label="Electropherogram tools"
                items={["zoom", "cross", "arc", "|", "lensLink", "boxLink", "grid", "pin", "#abs", "|", "redBars", "darkPeak", "mixBars", "abBars", "redPeak", "curve", "|", "plusX", "twin", "tiles"]}
              />
              <ElectropherogramPlot />
            </PlotPanel>
            <StatusBar>20230427_009_744-10899_Trastuzumab_wArgAutoCal</StatusBar>
            <Grip />
            <TabStrip tabs={[{ label: "Electropherogram Table" }, { label: "Peak Table", active: true }]} inset={10} height={30} />
            <Tables $left={406} $right={530} $gap={20}>
              <Stack>
                <TableToolbar />
                <DataTable
                  label="Peak table"
                  columns={peakColumns}
                  rows={peakRows}
                  selected={4}
                  height={421}
                  horizontal={<HorizontalScroll size={48} />}
                />
              </Stack>
              <Marker $top={156} />
              <Stack>
                <AnnotationHeader count={20} />
                <DataTable
                  label="Annotations"
                  columns={annotationColumns}
                  rows={annotationRows}
                  selected={0}
                  height={235}
                  vertical={<VerticalScroll head={BLANK} start={58} size={39} />}
                  horizontal={<HorizontalScroll corner size={35} />}
                />
                <StackGap />
                <Details rows={peakDetails} height={179} start={0} size={43} />
              </Stack>
            </Tables>
            <StatusBar>7 rows (1 selected)</StatusBar>
          </PaneBody>
        </Pane>

        <Pane $wide>
          <TabStrip tabs={[{ label: "MS Data", icon: "panes", active: true }]} inset={11} />
          <PaneBody>
            <MsPlots>
              <Stack>
                <TabStrip tabs={[{ label: "Ion Map", icon: "panes", active: true }]} inset={11} height={34} />
                <PlotPanel>
                  <PlotToolbar
                    label="Ion map tools"
                    items={["zoom", "rect", "cross", "lasso", "|", "lensLink", "boxLink", "grid", "#tic", "#log", "#max", "#P", "plusBlur", "heat", "layout", "|", "tiles", "peaks", "plusX", "star"]}
                  />
                  <IonMapPlot />
                </PlotPanel>
                <StatusBar>20230427_009_744-10899_Trastuzumab_wArgAutoCal</StatusBar>
              </Stack>
              <Stack>
                <TabStrip
                  tabs={[{ label: "Mass Spectrum", active: true }, { label: "Extracted Ion Chromatogram", divided: true }]}
                  inset={11}
                  height={34}
                />
                <SpectrumPanel>
                  <MassSpectrumPlot />
                  <MenuButton type="button" aria-label="Plot menu"><Icon name="menu" /></MenuButton>
                </SpectrumPanel>
                <SpectrumBar>
                  <RtButton type="button">RT</RtButton>
                  <Spinner>
                    <SpinInput aria-label="RT value" defaultValue="2.317" />
                    <SpinButtons>
                      <SpinButton type="button" aria-label="Increase">▲</SpinButton>
                      <SpinButton type="button" aria-label="Decrease">▼</SpinButton>
                    </SpinButtons>
                  </Spinner>
                  <EmptyStatus />
                </SpectrumBar>
              </Stack>
            </MsPlots>
            <Grip />
            <TabStrip
              tabs={[{ label: "Experiment Table", icon: "scope" }, { label: "Peak Table", active: true }]}
              inset={14}
              height={30}
            />
            <Tables $left={997} $right={639} $gap={19}>
              <Stack>
                <TableToolbar />
                <DataTable
                  label="Ion peak table"
                  columns={ionColumns}
                  rows={ionRows}
                  selected={3}
                  height={397}
                  scrollEnd
                  vertical={<VerticalScroll head={SORTER} start={27} size={16} />}
                  horizontal={<HorizontalScroll corner size={75} />}
                />
              </Stack>
              <Marker $top={170} />
              <Stack>
                <AnnotationHeader count={1} />
                <DataTable
                  label="Ion annotations"
                  columns={ionAnnotationColumns}
                  rows={ionAnnotationRows}
                  selected={0}
                  height={142}
                  horizontal={<HorizontalScroll size={54} />}
                />
                <StackGap />
                <Details rows={ionDetails} height={248} start={0} size={76} />
              </Stack>
            </Tables>
            <StatusBar>95 rows (1 selected)</StatusBar>
          </PaneBody>
        </Pane>
      </Workspace>
      <Footer>
        <FooterTab type="button" $active>Data <Icon name="windows" size={14} /></FooterTab>
        <FooterTab type="button">UV Quantities</FooterTab>
        <FooterTab type="button">Summary</FooterTab>
      </Footer>
    </Window>
  </Page>
)

export default App

const GlobalStyle = createGlobalStyle`
*{
  box-sizing:border-box;
}
body{
  margin:0;
  background:#fff;
  color:#000;
  font:15px/20px "DejaVu Sans Condensed", "Noto Sans", sans-serif;
}
button, input{
  font:inherit;
  color:inherit;
}
button{
  padding:0;
  border:0;
  background:none;
}
`

const Page = styled.main`
  padding: 124px 126px;
`

const Window = styled.div`
  background: #f0f0f0;
  border: 2px solid #a8a8a8;
  border-top: 1px solid #dcdcdc;
  border-bottom: 1px solid #dcdcdc;
`

const Workspace = styled.div`
  display: grid;
  grid-template-columns: minmax(0, 960fr) minmax(0, 1659fr);
  gap: 5px;
`

const Pane = styled.section`
  min-width: 0;
`

const PaneBody = styled.div`
  padding: 0 1px 0 3px;

  ${Pane} + ${Pane} & {
    padding: 0 2px;
  }
`

const Stack = styled.div`
  display: flex;
  flex-direction: column;
  min-width: 0;
`

const StackGap = styled.div`
  height: 7px;
`

const TabBar = styled.div`
  display: flex;
  align-items: flex-end;
  height: ${(p) => p.$height}px;
  padding-left: ${(p) => p.$inset}px;
  border-bottom: 2px solid #a0a0a0;
`

const Tab = styled.div`
  display: flex;
  align-items: center;
  gap: ${(p) => (p.$active ? 14 : 12)}px;
  height: 28px;
  padding: 0 ${(p) => (p.$active ? 9 : 5)}px 0 7px;
  border: 1px solid ${(p) => (p.$active ? "#a0a0a0" : "transparent")};
  border-width: 2px 2px 0 1px;
  border-right-color: ${(p) => (p.$active || p.$divided ? "#a0a0a0" : "transparent")};
  background: ${(p) => (p.$active ? "#e2e2e2" : "transparent")};
`

const TabLabel = styled.button`
  display: flex;
  align-items: center;
  gap: 7px;
  font-weight: ${(p) => (p.$active ? 700 : 400)};
  white-space: nowrap;
`

const CloseButton = styled.button`
  display: flex;
`

const PlotPanel = styled.div`
  background: #fff;
`

const Tools = styled.div`
  display: flex;
  align-items: center;
  height: 56px;
  padding-left: 2px;
`

const ToolButton = styled.button`
  display: flex;
  align-items: center;
  justify-content: center;
  width: 44px;
  height: 32px;
  color: ${(p) => (p.$muted ? "#777" : "#111")};
  font-size: ${(p) => (p.$muted ? 16 : 13)}px;
`

const ToolDivider = styled.span`
  width: 10px;
  height: 30px;
  background: linear-gradient(#a0a0a0, #a0a0a0) center / 1px 100% no-repeat;
`

const Plot = styled.svg`
  display: block;
  width: 100%;
  height: auto;
  min-width: 0;
  background: #fff;
  font-family: ${PLOT_FONT};
  font-size: 16px;
`

const PeakText = styled.text`
  font-size: 15px;
  fill: ${(p) => (p.$hot ? "#c00000" : "#404040")};
`

const GlycanText = styled(PeakText)`
  font-size: 14px;
`

const SpectrumPanel = styled.div`
  display: flex;
  align-items: flex-start;
  background: #fff;

  ${Plot} {
    flex: 1;
  }
`

const MenuButton = styled.button`
  width: 35px;
  padding: 5px 0 0 11px;
`

const StatusBar = styled.div`
  height: 27px;
  padding: 2px 3px;
  border: 1px solid #a0a0a0;
  border-top: 2px solid #707070;
  border-right-color: #fff;
  border-bottom-color: #fff;
  white-space: nowrap;
  overflow: hidden;
`

const Grip = styled.div`
  height: 8px;
  background: repeating-linear-gradient(90deg, #b0b0b0 0 1px, transparent 1px 3px) center / 22px 5px no-repeat;
`

const MsPlots = styled.div`
  display: grid;
  grid-template-columns: minmax(0, 952fr) minmax(0, 698fr);
  gap: 5px;
`

const SpectrumBar = styled.div`
  display: flex;
  align-items: stretch;
  gap: 3px;
  height: 27px;
  padding-left: 2px;
`

const RtButton = styled.button`
  width: 87px;
  border: 2px solid #adadad;
  background: #e1e1e1;
`

const Spinner = styled.div`
  display: flex;
  width: 138px;
  border: 1px solid #a0a0a0;
  background: #fff;
`

const SpinInput = styled.input`
  flex: 1;
  min-width: 0;
  padding: 0 3px;
  border: 0;
  background: transparent;
`

const SpinButtons = styled.div`
  display: flex;
  flex-direction: column;
  gap: 1px;
  width: 22px;
  padding: 1px;
`

const SpinButton = styled.button`
  flex: 1;
  border: 1px solid #acacac;
  background: #f0f0f0;
  font-size: 8px;
  line-height: 8px;
`

const EmptyStatus = styled.div`
  flex: 1;
  border: 1px solid #fff;
  border-top-color: #707070;
  border-left-color: #707070;
`

const Tables = styled.div`
  display: grid;
  grid-template-columns: minmax(0, ${(p) => p.$left}fr) ${(p) => p.$gap}px minmax(0, ${(p) => p.$right}fr);
`

const Marker = styled.div`
  &::before {
    content: "";
    display: block;
    width: 13px;
    height: 4px;
    margin-top: ${(p) => p.$top}px;
    background: #0000e0;
  }
`

const SmallTools = styled.div`
  display: flex;
  align-items: center;
  height: 35px;
  padding-left: 1px;
`

const SmallButton = styled.button`
  display: flex;
  align-items: center;
  justify-content: center;
  width: 30px;
  height: 29px;
  border: 1px solid ${(p) => (p.$pressed ? "#90c8f6" : "transparent")};
  background: ${(p) => (p.$pressed ? "#c2dcf3" : "transparent")};
`

const SmallDivider = styled.span`
  width: 1px;
  height: 25px;
  margin: 0 4px;
  background: #a0a0a0;
`

const AnnotationBar = styled.div`
  display: flex;
  align-items: center;
  gap: 3px;
  height: 35px;
  padding-left: 8px;
`

const TableBox = styled.div`
  display: flex;
  flex-direction: column;
  height: ${(p) => p.$height}px;
  border: 1px solid #828790;
  background: #fff;
`

const TableMain = styled.div`
  display: flex;
  flex: 1;
  min-height: 0;
`

const Viewport = styled.div`
  flex: 1;
  min-width: 0;
  overflow: hidden;
  background: repeating-linear-gradient(#fff 0 22px, #f0f0f0 22px 44px) 0 34px;
`

const Table = styled.table`
  width: 100%;
  table-layout: fixed;
  border-collapse: separate;
  border-spacing: 0;
`

const Col = styled.col`
  width: ${(p) => (p.$width ? `${p.$width}px` : "auto")};
`

const Th = styled.th`
  position: sticky;
  top: 0;
  height: 34px;
  padding: 0 0 0 6px;
  border-right: 1px solid #e0e0e0;
  background: #fff;
  font-weight: 400;
  text-align: left;
  white-space: nowrap;
  overflow: hidden;

  &:last-child {
    border-right: 0;
  }
`

const Td = styled.td`
  height: 22px;
  padding: 0 1px;
  border-right: 1px solid #fff;
  line-height: 20px;
  text-align: ${(p) => (p.$right ? "right" : "left")};
  white-space: nowrap;
  overflow: hidden;

  &:last-child {
    border-right: 0;
  }
`

const Tr = styled.tr`
  background: #fff;
  color: #000;

  &:nth-child(even) {
    background: #f0f0f0;
  }

  &&{
    ${(p) => p.$selected && "background: #0078d7; color: #fff;"}
  }
`

const HTrack = styled.div`
  display: flex;
  height: 22px;
  padding-right: ${(p) => (p.$corner ? 24 : 0)}px;
  background: #f0f0f0;
`

const ArrowButton = styled.button`
  display: flex;
  align-items: center;
  justify-content: center;
  flex: none;
  width: 24px;
  height: 22px;
`

const ThumbLane = styled.div`
  flex: 1;
`

const HThumb = styled.div`
  width: ${(p) => p.$size}%;
  height: 21px;
  background: #cdcdcd;
`

const VTrack = styled.div`
  display: flex;
  flex-direction: column;
  flex: none;
  width: 24px;
  background: #f0f0f0;
`

const VHead = styled.div`
  display: flex;
  align-items: center;
  justify-content: center;
  height: 34px;
`

const VLane = styled.div`
  display: grid;
  flex: 1;
  grid-template-rows: ${(p) => p.$start}fr ${(p) => p.$size}fr ${(p) => 100 - p.$start - p.$size}fr;
  justify-content: center;
`

const VThumb = styled.div`
  grid-row: 2;
  width: 22px;
  background: #cdcdcd;
`

const DetailBox = styled.div`
  display: flex;
  height: ${(p) => p.$height}px;
  border: 1px solid #a0a0a0;
  background: #fff;
  overflow: hidden;
`

const DetailList = styled.dl`
  flex: 1;
  margin: 0;
  padding-top: 1px;
`

const DetailRow = styled.div`
  display: grid;
  grid-template-columns: 153px 1fr;
  align-items: center;
  height: ${(p) => (p.$compact ? 35 : 37)}px;
  padding-left: 6px;

  dd {
    margin: 0;
  }
`

const Footer = styled.footer`
  display: flex;
  height: 28px;
  margin-top: 5px;
  border-top: 1px solid #707070;
`

const FooterTab = styled.button`
  display: flex;
  align-items: center;
  gap: 8px;
  height: 26px;
  padding: 0 6px;
  border-right: 1px solid #808080;
  border-bottom: ${(p) => (p.$active ? 0 : "2px solid #808080")};
  background: ${(p) => (p.$active ? "#dcdcdc" : "#f0f0f0")};
`
